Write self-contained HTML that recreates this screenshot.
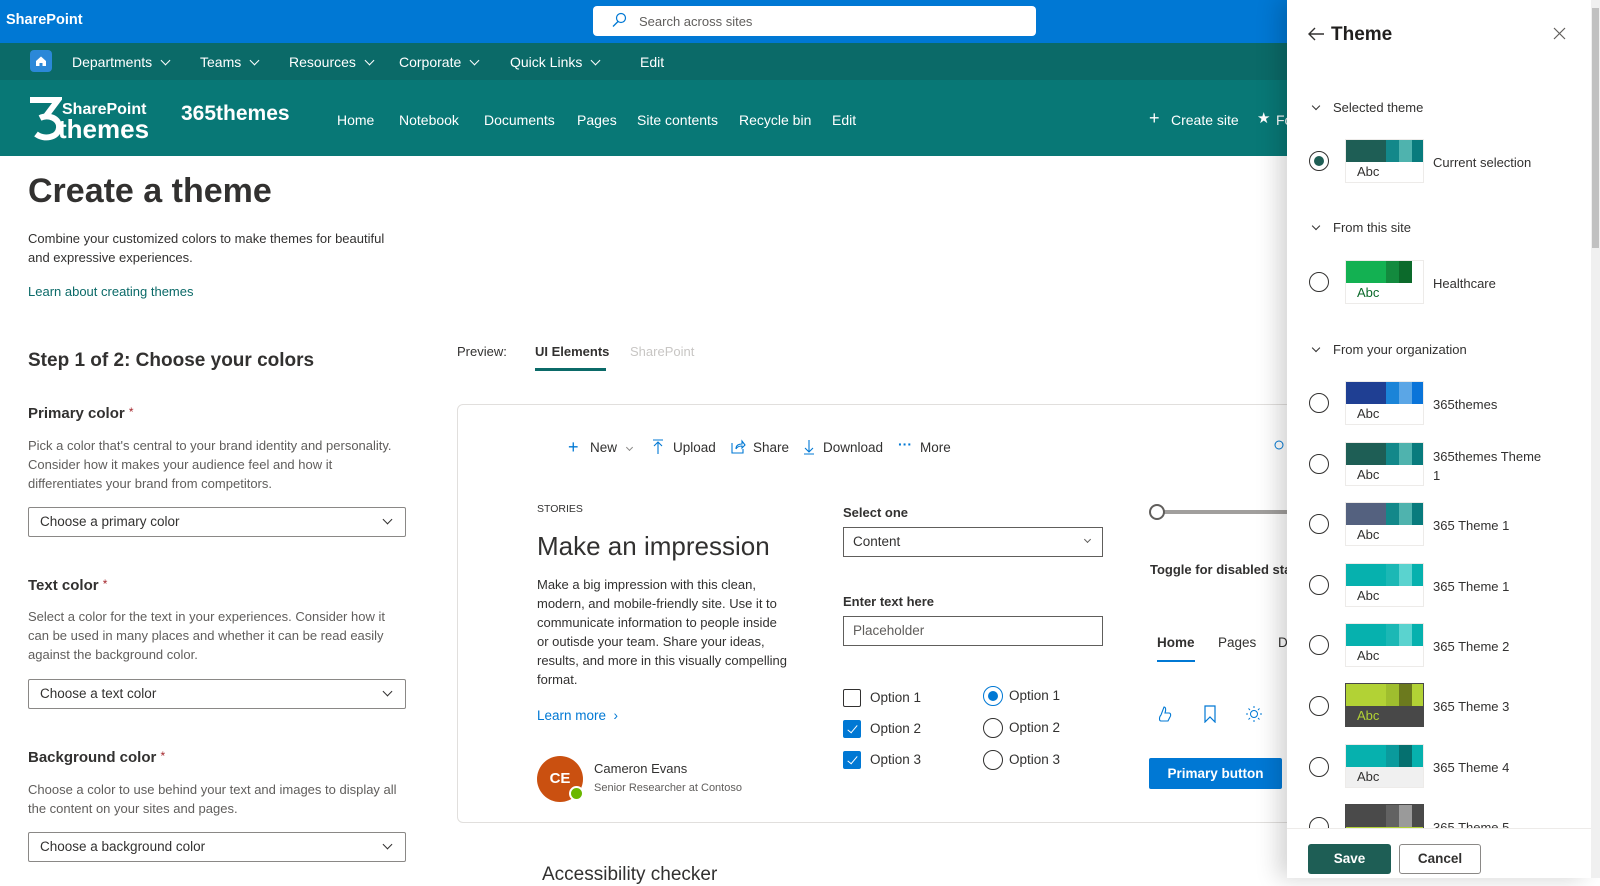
<!DOCTYPE html>
<html><head><meta charset="utf-8"><style>
*{box-sizing:border-box;margin:0;padding:0}
body{width:1600px;height:878px;overflow:hidden;position:relative;font-family:"Liberation Sans",Arial,sans-serif;color:#323130;background:#fff}
.a{position:absolute;white-space:nowrap}
.top{position:absolute;left:0;top:0;width:1600px;height:43px;background:#0078d4}
.nav{position:absolute;left:0;top:43px;width:1600px;height:37px;background:#0b6a68}
.hdr{position:absolute;left:0;top:80px;width:1600px;height:76px;background:#087876}
.w{color:#fff;font-size:14px}
.chev{display:inline-block;width:7px;height:7px;border-right:1.3px solid currentColor;border-bottom:1.3px solid currentColor;transform:rotate(45deg);margin-left:10px;position:relative;top:-3px}
.g{color:#605e5c;font-size:13px;line-height:19px}
.dd{position:absolute;left:28px;width:378px;height:30px;border:1px solid #8a8886;border-radius:2px;font-size:13.5px;padding:6px 11px;color:#323130}
.dd .chev{position:absolute;right:14px;top:8px;margin:0}
.lbl{font-size:15px;font-weight:bold;color:#323130}
.lbl i{color:#a4262c;font-style:normal;font-weight:normal;font-size:12px;vertical-align:top}
.panel{position:absolute;left:1287px;top:0;width:304px;height:878px;background:#fff;box-shadow:-8px 0 22px rgba(0,0,0,.18)}
.rad{position:absolute;width:20px;height:20px;border:1px solid #323130;border-radius:50%;background:#fff}
.sw{position:absolute;width:79px;height:44px;border:1px solid #edebe9;background:#fff;overflow:hidden}
.sw .s{position:absolute;top:0;height:22px}
.sw .t{position:absolute;left:11px;top:24px;font-size:13px}
.tn{position:absolute;font-size:13px;color:#323130}
.sec{position:absolute;font-size:13px;color:#323130}
.sec .chev{margin:0 14px 0 0;width:6px;height:6px;top:-3px}
.cb{position:absolute;width:18px;height:18px;border:1px solid #323130;border-radius:2px}
.cb.on{background:#0078d4;border-color:#0078d4}
.cb.on:after{content:"";position:absolute;left:6px;top:2px;width:4px;height:9px;border-right:1.5px solid #fff;border-bottom:1.5px solid #fff;transform:rotate(40deg)}
.ro{position:absolute;width:20px;height:20px;border:1px solid #323130;border-radius:50%}
.ot{position:absolute;font-size:13.5px;color:#323130}
</style></head><body>
<div class="top"></div>
<div class="a w" style="left:6px;top:12px;font-weight:bold;font-size:14.5px">SharePoint</div>
<div class="a" style="left:593px;top:6px;width:443px;height:30px;background:#fff;border-radius:4px"></div>
<svg class="a" style="left:611px;top:12px" width="16" height="16" viewBox="0 0 16 16"><circle cx="10" cy="6" r="4.5" fill="none" stroke="#0078d4" stroke-width="1.2"/><path d="M7 9.5 L2 14.5" stroke="#0078d4" stroke-width="1.3"/></svg>
<div class="a" style="left:639px;top:14px;font-size:13px;color:#605e5c">Search across sites</div>

<div class="nav"></div>
<div class="a" style="left:30px;top:50px;width:22px;height:22px;background:#2b88d8;border-radius:4px"></div>
<svg class="a" style="left:34px;top:54px" width="14" height="14" viewBox="0 0 14 14"><path d="M2 7 L7 2.5 L12 7 V12 H8.5 V9 H5.5 V12 H2Z" fill="#fff"/></svg>
<div class="a w" style="left:72px;top:54px">Departments<span class="chev"></span></div>
<div class="a w" style="left:200px;top:54px">Teams<span class="chev"></span></div>
<div class="a w" style="left:289px;top:54px">Resources<span class="chev"></span></div>
<div class="a w" style="left:399px;top:54px">Corporate<span class="chev"></span></div>
<div class="a w" style="left:510px;top:54px">Quick Links<span class="chev"></span></div>
<div class="a w" style="left:640px;top:54px">Edit</div>

<div class="hdr"></div>
<svg class="a" style="left:28px;top:96px" width="34" height="46" viewBox="0 0 34 46"><path d="M2 4H30L18 20" stroke="#fff" stroke-width="6" fill="none"/><path d="M12 22C20 18 32 22 31 32C30 42 16 44 8 38" stroke="#fff" stroke-width="6" fill="none"/></svg>
<div class="a" style="left:62px;top:101px;color:#fff;font-weight:bold;font-size:16px;line-height:18px">SharePoint</div>
<div class="a" style="left:58px;top:115px;color:#fff;font-weight:bold;font-size:26px;line-height:28px">themes</div>
<div class="a" style="left:181px;top:102px;color:#fff;font-weight:bold;font-size:21px">365themes</div>
<div class="a w" style="left:337px;top:112px">Home</div>
<div class="a w" style="left:399px;top:112px">Notebook</div>
<div class="a w" style="left:484px;top:112px">Documents</div>
<div class="a w" style="left:577px;top:112px">Pages</div>
<div class="a w" style="left:637px;top:112px">Site contents</div>
<div class="a w" style="left:739px;top:112px">Recycle bin</div>
<div class="a w" style="left:832px;top:112px">Edit</div>
<div class="a w" style="left:1149px;top:108px;font-size:18px">+</div>
<div class="a w" style="left:1171px;top:112px">Create site</div>
<div class="a w" style="left:1257px;top:109px;font-size:15px">★</div>
<div class="a w" style="left:1276px;top:112px">Fo</div>

<div class="a" style="left:28px;top:172px;font-size:34px;font-weight:bold;color:#323130">Create a theme</div>
<div class="a g" style="left:28px;top:229px;color:#323130">Combine your customized colors to make themes for beautiful<br>and expressive experiences.</div>
<div class="a" style="left:28px;top:284px;font-size:13px;color:#0b6a68">Learn about creating themes</div>
<div class="a" style="left:28px;top:350px;font-size:19px;font-weight:bold;color:#323130">Step 1 of 2: Choose your colors</div>

<div class="a lbl" style="left:28px;top:405px">Primary color <i>*</i></div>
<div class="a g" style="left:28px;top:436px">Pick a color that's central to your brand identity and personality.<br>Consider how it makes your audience feel and how it<br>differentiates your brand from competitors.</div>
<div class="dd" style="top:507px">Choose a primary color<span class="chev"></span></div>
<div class="a lbl" style="left:28px;top:577px">Text color <i>*</i></div>
<div class="a g" style="left:28px;top:607px">Select a color for the text in your experiences. Consider how it<br>can be used in many places and whether it can be read easily<br>against the background color.</div>
<div class="dd" style="top:679px">Choose a text color<span class="chev"></span></div>
<div class="a lbl" style="left:28px;top:749px">Background color <i>*</i></div>
<div class="a g" style="left:28px;top:780px">Choose a color to use behind your text and images to display all<br>the content on your sites and pages.</div>
<div class="dd" style="top:832px">Choose a background color<span class="chev"></span></div>

<div class="a" style="left:457px;top:344px;font-size:13px">Preview:</div>
<div class="a" style="left:535px;top:344px;font-size:13px;font-weight:bold">UI Elements</div>
<div class="a" style="left:535px;top:368px;width:71px;height:3px;background:#0b6a68"></div>
<div class="a" style="left:630px;top:344px;font-size:13px;color:#c8c6c4">SharePoint</div>

<div class="a" style="left:457px;top:404px;width:900px;height:419px;border:1px solid #e1dfdd;border-radius:6px"></div>
<div class="a" style="left:568px;top:437px;font-size:18px;color:#0078d4">+</div>
<div class="a" style="left:590px;top:440px;font-size:13.5px">New</div>
<div class="a" style="left:627px;top:440px;color:#8a8886"><span class="chev" style="margin:0;width:5px;height:5px"></span></div>
<svg class="a" style="left:652px;top:439px" width="12" height="16"><path d="M1 1H11M6 3V15M2 7L6 3L10 7" stroke="#0078d4" fill="none" stroke-width="1.1"/></svg>
<div class="a" style="left:673px;top:440px;font-size:13.5px">Upload</div>
<svg class="a" style="left:731px;top:439px" width="15" height="15"><path d="M1 4V14H12V10M5 10C5 6 8 5 11 5V2L14 6L11 9V7C8 7 6 8 5 10" stroke="#0078d4" fill="none" stroke-width="1.1"/></svg>
<div class="a" style="left:753px;top:440px;font-size:13.5px">Share</div>
<svg class="a" style="left:803px;top:439px" width="12" height="16"><path d="M6 1V13M2 9L6 13L10 9M1 15H11" stroke="#0078d4" fill="none" stroke-width="1.1"/></svg>
<div class="a" style="left:823px;top:440px;font-size:13.5px">Download</div>
<div class="a" style="left:898px;top:436px;font-size:14px;color:#0078d4;font-weight:bold">···</div>
<div class="a" style="left:920px;top:440px;font-size:13.5px">More</div>
<svg class="a" style="left:1274px;top:440px" width="12" height="12"><circle cx="5" cy="5" r="4" stroke="#0078d4" fill="none"/></svg>

<div class="a" style="left:537px;top:503px;font-size:10.5px">STORIES</div>
<div class="a" style="left:537px;top:531px;font-size:26px">Make an impression</div>
<div class="a" style="left:537px;top:575px;font-size:13px;line-height:19px;color:#323130">Make a big impression with this clean,<br>modern, and mobile-friendly site. Use it to<br>communicate information to people inside<br>or outisde your team. Share your ideas,<br>results, and more in this visually compelling<br>format.</div>
<div class="a" style="left:537px;top:708px;font-size:13.5px;color:#0078d4">Learn more &nbsp;›</div>
<div class="a" style="left:537px;top:756px;width:46px;height:46px;border-radius:50%;background:#ca5010;color:#fff;font-weight:bold;font-size:15px;text-align:center;line-height:46px">CE</div>
<div class="a" style="left:569px;top:786px;width:15px;height:15px;border-radius:50%;background:#6bb700;border:2px solid #fff"></div>
<div class="a" style="left:594px;top:761px;font-size:13px">Cameron Evans</div>
<div class="a" style="left:594px;top:782px;font-size:11px;color:#605e5c">Senior Researcher at Contoso</div>

<div class="a" style="left:843px;top:505px;font-size:13px;font-weight:bold">Select one</div>
<div class="a" style="left:843px;top:527px;width:260px;height:30px;border:1px solid #605e5c;font-size:13.5px;padding:6px 9px">Content<span class="chev" style="position:absolute;right:12px;top:9px;margin:0;width:5px;height:5px;color:#605e5c"></span></div>
<div class="a" style="left:843px;top:594px;font-size:13px;font-weight:bold">Enter text here</div>
<div class="a" style="left:843px;top:616px;width:260px;height:30px;border:1px solid #605e5c;font-size:13.5px;padding:6px 9px;color:#605e5c">Placeholder</div>
<div class="cb" style="left:843px;top:689px"></div><div class="ot" style="left:870px;top:690px">Option 1</div>
<div class="cb on" style="left:843px;top:720px"></div><div class="ot" style="left:870px;top:721px">Option 2</div>
<div class="cb on" style="left:843px;top:751px"></div><div class="ot" style="left:870px;top:752px">Option 3</div>
<div class="ro" style="left:983px;top:686px;border-color:#0078d4"><div style="position:absolute;left:4px;top:4px;width:10px;height:10px;border-radius:50%;background:#0078d4"></div></div><div class="ot" style="left:1009px;top:688px">Option 1</div>
<div class="ro" style="left:983px;top:718px"></div><div class="ot" style="left:1009px;top:720px">Option 2</div>
<div class="ro" style="left:983px;top:750px"></div><div class="ot" style="left:1009px;top:752px">Option 3</div>

<div class="a" style="left:1150px;top:510px;width:140px;height:4px;background:#a19f9d;border-radius:2px"></div>
<div class="a" style="left:1149px;top:504px;width:16px;height:16px;border:2px solid #605e5c;border-radius:50%;background:#fff"></div>
<div class="a" style="left:1150px;top:562px;font-size:13px;font-weight:bold">Toggle for disabled sta</div>
<div class="a" style="left:1157px;top:635px;font-size:13.5px;font-weight:bold">Home</div>
<div class="a" style="left:1157px;top:660px;width:38px;height:2px;background:#0078d4"></div>
<div class="a" style="left:1218px;top:635px;font-size:13.5px">Pages</div>
<div class="a" style="left:1278px;top:635px;font-size:13.5px">D</div>
<svg class="a" style="left:1157px;top:705px" width="16" height="18"><path d="M4 16C2 16 2 12 4 10L7 2C9 2 9 5 8 8H12C14 8 14 11 13 12L11 16Z" stroke="#0078d4" fill="none" stroke-width="1.1"/></svg>
<svg class="a" style="left:1203px;top:705px" width="14" height="18"><path d="M2 1H12V17L7 12L2 17Z" stroke="#0078d4" fill="none" stroke-width="1.2"/></svg>
<svg class="a" style="left:1245px;top:705px" width="18" height="18"><circle cx="9" cy="9" r="3.5" stroke="#0078d4" fill="none"/><path d="M9 1V3M9 15V17M1 9H3M15 9H17M3.5 3.5L5 5M13 13L14.5 14.5M3.5 14.5L5 13M13 5L14.5 3.5" stroke="#0078d4"/></svg>
<div class="a" style="left:1149px;top:758px;width:133px;height:31px;background:#0078d4;border-radius:2px;color:#fff;font-weight:bold;font-size:13.5px;line-height:31px;text-align:center">Primary button</div>
<div class="a" style="left:542px;top:864px;font-size:19px">Accessibility checker</div>

<div class="panel"></div>
<svg class="a" style="left:1307px;top:26px" width="18" height="16"><path d="M17 8H2M8 2L2 8L8 14" stroke="#323130" fill="none" stroke-width="1.4"/></svg>
<div class="a" style="left:1331px;top:24px;font-size:19px;font-weight:bold;color:#201f1e">Theme</div>
<svg class="a" style="left:1553px;top:27px" width="13" height="13"><path d="M1 1L12 12M12 1L1 12" stroke="#605e5c" stroke-width="1.2"/></svg>

<div style="position:absolute;left:1287px;top:0;width:304px;height:828px;overflow:hidden">
<div style="position:absolute;left:-1287px;top:0;width:1600px;height:878px">
<div class="sec" style="left:1313px;top:100px"><span class="chev"></span>Selected theme</div>
<div class="rad" style="left:1309px;top:151px;border-color:#323130"><div style="position:absolute;left:4px;top:4px;width:10px;height:10px;border-radius:50%;background:#1e5e55"></div></div>
<div class="sw" style="left:1345px;top:139px"><div class="s" style="left:0;width:40px;background:#1e5e55"></div><div class="s" style="left:40px;width:13px;background:#13888a"></div><div class="s" style="left:53px;width:13px;background:#4fb3ae"></div><div class="s" style="left:66px;width:13px;background:#087b7d"></div><div class="t">Abc</div></div>
<div class="tn" style="left:1433px;top:155px">Current selection</div>

<div class="sec" style="left:1313px;top:220px"><span class="chev"></span>From this site</div>
<div class="rad" style="left:1309px;top:272px"></div>
<div class="sw" style="left:1345px;top:260px"><div class="s" style="left:0;width:40px;background:#13b152"></div><div class="s" style="left:40px;width:13px;background:#138a3e"></div><div class="s" style="left:53px;width:13px;background:#0c6a2b"></div><div class="t" style="color:#0c6a2b">Abc</div></div>
<div class="tn" style="left:1433px;top:276px">Healthcare</div>

<div class="sec" style="left:1313px;top:342px"><span class="chev"></span>From your organization</div>

<div class="rad" style="left:1309px;top:393px"></div>
<div class="sw" style="left:1345px;top:381px"><div class="s" style="left:0;width:40px;background:#1f3f93"></div><div class="s" style="left:40px;width:13px;background:#1b84d8"></div><div class="s" style="left:53px;width:13px;background:#5ba6e6"></div><div class="s" style="left:66px;width:13px;background:#0a74d9"></div><div class="t">Abc</div></div>
<div class="tn" style="left:1433px;top:397px">365themes</div>

<div class="rad" style="left:1309px;top:454px"></div>
<div class="sw" style="left:1345px;top:442px"><div class="s" style="left:0;width:40px;background:#1e5e55"></div><div class="s" style="left:40px;width:13px;background:#13888a"></div><div class="s" style="left:53px;width:13px;background:#4fb3ae"></div><div class="s" style="left:66px;width:13px;background:#087b7d"></div><div class="t">Abc</div></div>
<div class="tn" style="left:1433px;top:447px;line-height:19px">365themes Theme<br>1</div>

<div class="rad" style="left:1309px;top:514px"></div>
<div class="sw" style="left:1345px;top:502px"><div class="s" style="left:0;width:40px;background:#54617f"></div><div class="s" style="left:40px;width:13px;background:#13888a"></div><div class="s" style="left:53px;width:13px;background:#4fb3ae"></div><div class="s" style="left:66px;width:13px;background:#087b7d"></div><div class="t">Abc</div></div>
<div class="tn" style="left:1433px;top:518px">365 Theme 1</div>

<div class="rad" style="left:1309px;top:575px"></div>
<div class="sw" style="left:1345px;top:563px"><div class="s" style="left:0;width:40px;background:#06b1ae"></div><div class="s" style="left:40px;width:13px;background:#1bb8b5"></div><div class="s" style="left:53px;width:13px;background:#5ad3cf"></div><div class="s" style="left:66px;width:13px;background:#06b1ae"></div><div class="t">Abc</div></div>
<div class="tn" style="left:1433px;top:579px">365 Theme 1</div>

<div class="rad" style="left:1309px;top:635px"></div>
<div class="sw" style="left:1345px;top:623px"><div class="s" style="left:0;width:40px;background:#06b1ae"></div><div class="s" style="left:40px;width:13px;background:#1bb8b5"></div><div class="s" style="left:53px;width:13px;background:#5ad3cf"></div><div class="s" style="left:66px;width:13px;background:#06b1ae"></div><div class="t">Abc</div></div>
<div class="tn" style="left:1433px;top:639px">365 Theme 2</div>

<div class="rad" style="left:1309px;top:696px"></div>
<div class="sw" style="left:1345px;top:683px;background:#484848;border-color:#484848"><div class="s" style="left:0;width:40px;background:#b2d235"></div><div class="s" style="left:40px;width:13px;background:#9fbe2e"></div><div class="s" style="left:53px;width:13px;background:#6c7a1e"></div><div class="s" style="left:66px;width:13px;background:#b2d235"></div><div class="t" style="color:#b2d235">Abc</div></div>
<div class="tn" style="left:1433px;top:699px">365 Theme 3</div>

<div class="rad" style="left:1309px;top:757px"></div>
<div class="sw" style="left:1345px;top:744px;background:#f0f0f0"><div class="s" style="left:0;width:40px;background:#06b1ae"></div><div class="s" style="left:40px;width:13px;background:#0a9a9c"></div><div class="s" style="left:53px;width:13px;background:#05706f"></div><div class="s" style="left:66px;width:13px;background:#06b1ae"></div><div class="t">Abc</div></div>
<div class="tn" style="left:1433px;top:760px">365 Theme 4</div>

<div class="rad" style="left:1309px;top:817px"></div>
<div class="sw" style="left:1345px;top:804px;background:#484848;border-color:#484848"><div class="s" style="left:0;width:40px;background:#4a4a4a"></div><div class="s" style="left:40px;width:13px;background:#626262"></div><div class="s" style="left:53px;width:13px;background:#9a9a9a"></div><div class="s" style="left:66px;width:13px;background:#4a4a4a"></div><div class="s" style="left:0;top:22px;height:3px;width:79px;background:#b2d235"></div></div>
<div class="tn" style="left:1433px;top:820px">365 Theme 5</div>
</div></div>

<div class="a" style="left:1287px;top:828px;width:304px;height:1px;background:#edebe9"></div>
<div class="a" style="left:1308px;top:844px;width:83px;height:30px;background:#1e5e55;border-radius:3px;color:#fff;font-weight:bold;font-size:13.5px;text-align:center;line-height:30px">Save</div>
<div class="a" style="left:1399px;top:844px;width:82px;height:30px;border:1px solid #8a8886;border-radius:3px;font-weight:bold;font-size:13.5px;text-align:center;line-height:28px">Cancel</div>

<div class="a" style="left:1591px;top:0;width:9px;height:878px;background:#f0f0f0"></div>
<div class="a" style="left:1592px;top:8px;width:7px;height:240px;background:#c1c1c1"></div>
</body></html>
